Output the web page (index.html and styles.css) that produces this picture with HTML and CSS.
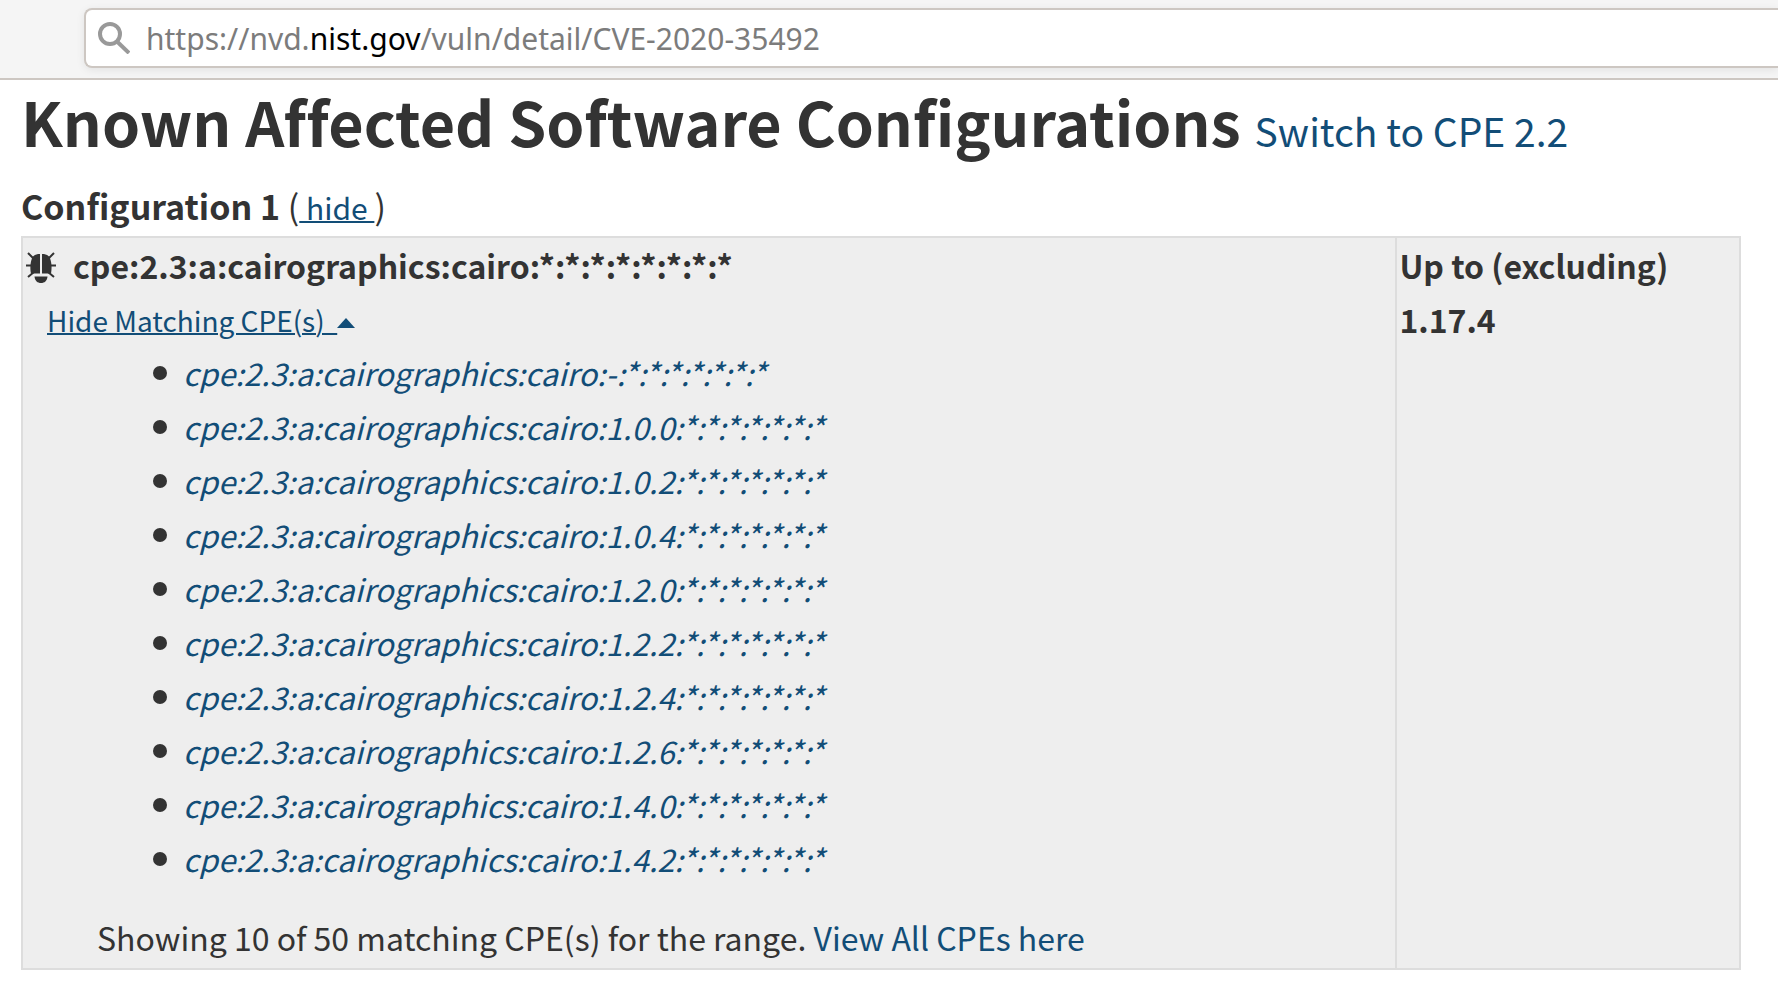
FILE: index.html
```html
<!DOCTYPE html>
<html lang="en">
<head>
<meta charset="utf-8">
<title>NVD - CVE-2020-35492</title>
<link rel="stylesheet" href="styles.css">
</head>
<body>
<header class="toolbar">
  <div class="address">
    <svg class="search-icon" viewBox="0 0 32 32" aria-hidden="true"><circle cx="12" cy="12" r="10"/><path d="M18.500 19L31 31"/></svg>
    <div class="url" role="textbox" aria-label="Address" contenteditable="true" spellcheck="false">https://nvd.<span class="domain">nist.gov</span>/vuln/detail/CVE-2020-35492</div>
  </div>
</header>
<main class="content">
  <h1 class="title">Known Affected Software Configurations <a class="switch" href="#">Switch to CPE 2.2</a></h1>
  <h2 class="config">Configuration 1 <span class="toggle">(<a href="#">&nbsp;hide&nbsp;</a>)</span></h2>
  <table class="matches">
    <tbody>
      <tr>
        <td class="cpe">
          <p class="cpe-name">
            <svg class="bug" viewBox="0 0 32 32" aria-hidden="true">
              <path class="legs" d="M3 2l6 6M29 2l-6 6M1 14.500h8M31 14.500h-8M3 26l6-5M29 26l-6-5"/>
              <path d="M15 3v19.500H6C5 18 5 10 8 5.500C10 3.500 12 3 15 3zM17 3v19.500h9C27 18 27 10 24 5.500C22 3.500 20 3 17 3z"/>
              <path d="M9.500 25.500h13C22 30 19.500 32 16 32s-6-2-6.500-6.500z"/>
            </svg>
            <b>cpe:2.3:a:cairographics:cairo:*:*:*:*:*:*:*:*</b>
          </p>
          <p class="hide-row"><a href="#"><span>Hide Matching CPE(s) &nbsp;</span><svg class="caret" viewBox="0 0 18 10" aria-hidden="true"><path d="M0 10L9 0l9 10z"/></svg></a></p>
          <ul class="list">
            <li><a href="#">cpe:2.3:a:cairographics:cairo:-:*:*:*:*:*:*:*</a></li>
            <li><a href="#">cpe:2.3:a:cairographics:cairo:1.0.0:*:*:*:*:*:*:*</a></li>
            <li><a href="#">cpe:2.3:a:cairographics:cairo:1.0.2:*:*:*:*:*:*:*</a></li>
            <li><a href="#">cpe:2.3:a:cairographics:cairo:1.0.4:*:*:*:*:*:*:*</a></li>
            <li><a href="#">cpe:2.3:a:cairographics:cairo:1.2.0:*:*:*:*:*:*:*</a></li>
            <li><a href="#">cpe:2.3:a:cairographics:cairo:1.2.2:*:*:*:*:*:*:*</a></li>
            <li><a href="#">cpe:2.3:a:cairographics:cairo:1.2.4:*:*:*:*:*:*:*</a></li>
            <li><a href="#">cpe:2.3:a:cairographics:cairo:1.2.6:*:*:*:*:*:*:*</a></li>
            <li><a href="#">cpe:2.3:a:cairographics:cairo:1.4.0:*:*:*:*:*:*:*</a></li>
            <li><a href="#">cpe:2.3:a:cairographics:cairo:1.4.2:*:*:*:*:*:*:*</a></li>
          </ul>
          <p class="summary">Showing 10 of 50 matching CPE(s) for the range. <a href="#">View All CPEs here</a></p>
        </td>
        <td class="range"><b>Up to (excluding)<br>1.17.4</b></td>
      </tr>
    </tbody>
  </table>
</main>
</body>
</html>
```

FILE: styles.css
```css
* { box-sizing: border-box; }
body { margin: 0; background: #fff; color: #333; font: 32px/54px "Noto Sans CJK SC", "Noto Sans", sans-serif; font-variant-ligatures: none; }
a { color: #124d77; text-decoration: none; }
p { margin: 0; }

.toolbar { height: 80px; padding: 8px 0 0 84px; background: #f5f5f5; border-bottom: 2px solid #cdc7c2; }
.address { display: flex; align-items: center; gap: 16px; height: 60px; padding-left: 12px; background: #fff; border: 2px solid #cdc7c2; border-right: 0; border-radius: 8px 0 0 8px; box-shadow: 0 2px 8px rgba(0, 0, 0, 0.08); }
.search-icon { width: 32px; height: 32px; fill: none; stroke: #999; stroke-width: 4; }
.url { padding-top: 2px; font: 30px/40px "Noto Sans", sans-serif; color: #7c7c7c; outline: 0; }
.domain { color: #000; }

.content { padding: 0 37px 36px 21px; }
.title { margin: 0; font-size: 61px; line-height: 82px; }
.switch { font-size: 39px; font-weight: 400; line-height: 1; }
.config { margin: 20px 0 6px; font-size: 34px; line-height: 48px; }
.toggle { font-weight: 400; }
.toggle a { font-size: 30px; line-height: 1; text-decoration: underline 2px; }

.matches { width: 100%; border-collapse: collapse; background: #eee; }
.matches td { border: 2px solid #ddd; padding: 0 2px 4px; vertical-align: top; }
.matches .cpe { width: 80%; }
.cpe-name { display: flex; align-items: center; gap: 16px; padding-bottom: 2px; }
.bug { width: 32px; height: 32px; margin-top: 4px; fill: #333; }
.legs { fill: none; stroke: #333; stroke-width: 2; }
.hide-row { padding-left: 22px; font-size: 28px; line-height: 52px; }
.hide-row span { text-decoration: underline 2px; }
.caret { width: 18px; height: 10px; fill: #124d77; vertical-align: 4px; }
.list { margin: 0; padding: 0 0 0 128px; font-size: 31px; font-style: italic; list-style: none; }
.list li { display: flex; align-items: center; gap: 16px; }
.list li::before { content: ""; width: 14px; height: 14px; border-radius: 50%; background: #333; }
.summary { padding: 24px 0 0 72px; }
```
